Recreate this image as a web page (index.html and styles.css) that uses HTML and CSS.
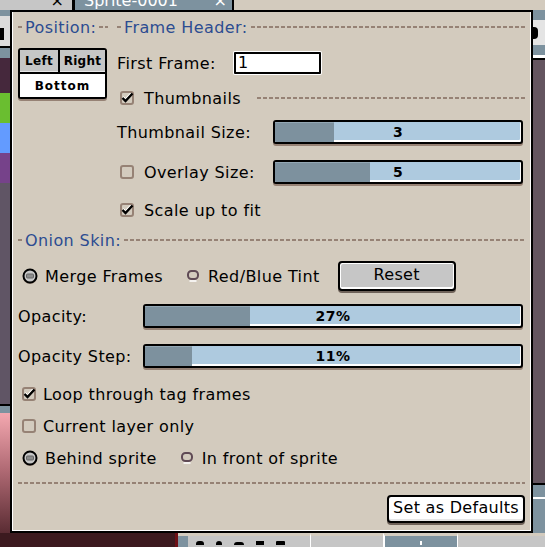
FILE: index.html
```html
<!DOCTYPE html>
<html lang="en">
<head>
    <meta charset="UTF-8">
    <title>Onion Skin / Frame Header</title>
    <link rel="stylesheet" href="styles.css">
</head>
<body>
    <div class="desk">
        <div class="tabbar">
            <div class="tab tab-off"><span class="tab-x">×</span></div>
            <div class="tab tab-on"><span class="tab-name">Sprite-0001</span><span class="tab-x">×</span></div>
            <div class="tab-rest"></div>
        </div>
        <div class="mid">
            <div class="strip strip-left"><span class="glyph glyph-left"></span></div>
            <div class="canvas"></div>
            <div class="strip strip-right"><span class="glyph glyph-right"></span></div>
        </div>
        <div class="statusbar">
            <div class="sb sb-canvas"></div>
            <div class="sb sb-red"></div>
            <div class="sb sb-blue"></div>
            <div class="sb sb-tools">
                <span class="ico ico-eye"></span>
                <span class="ico ico-lock"></span>
                <span class="ico ico-link"></span>
                <span class="ico ico-cel"></span>
                <span class="ico ico-box"></span>
            </div>
            <div class="sb sb-grey"></div>
            <div class="sb sb-frame"><span class="ico ico-plus"></span></div>
            <div class="sb sb-end"></div>
        </div>
    </div>

    <div class="popup">
        <div class="top">
            <div class="pos-col">
                <div class="sep-title"><span class="title">Position:</span><span class="dash"></span></div>
                <div class="seg">
                    <div class="seg-btn">Left</div>
                    <div class="seg-btn">Right</div>
                    <div class="seg-btn seg-wide seg-on">Bottom</div>
                </div>
            </div>

            <div class="frame-col">
                <div class="sep-title"><span class="title">Frame Header:</span><span class="dash"></span></div>

                <div class="row r-first">
                    <span class="lbl-first">First Frame:</span>
                    <div class="num">1</div>
                </div>

                <div class="row r-thumbs">
                    <svg class="cb" width="14" height="14" viewBox="0 0 14 14"><rect x="1" y="1" width="12" height="12" rx="2" fill="none" stroke="#968275" stroke-width="2"/><path d="M2.5 7 L5.5 10 L12.5 2.5" fill="none" stroke="#000" stroke-width="2.4"/><path d="M3.5 5.5 L5.5 7.5 L10.5 2" fill="none" stroke="#fff" stroke-width="1"/></svg>
                    <span class="txt">Thumbnails</span>
                    <span class="dash dash-thumbs"></span>
                </div>

                <div class="row r-tsize">
                    <span class="lbl-frame">Thumbnail Size:</span>
                    <div class="slider"><span class="fill" style="width: 59px"></span><span class="val">3</span></div>
                </div>

                <div class="row r-overlay">
                    <span class="lbl-frame">
                        <svg class="cb" width="14" height="14" viewBox="0 0 14 14"><rect x="1" y="1" width="12" height="12" rx="2" fill="none" stroke="#968275" stroke-width="2"/></svg>
                        <span class="txt">Overlay Size:</span>
                    </span>
                    <div class="slider"><span class="fill" style="width: 95px"></span><span class="val">5</span></div>
                </div>

                <div class="row r-scale">
                    <svg class="cb" width="14" height="14" viewBox="0 0 14 14"><rect x="1" y="1" width="12" height="12" rx="2" fill="none" stroke="#968275" stroke-width="2"/><path d="M2.5 7 L5.5 10 L12.5 2.5" fill="none" stroke="#000" stroke-width="2.4"/><path d="M3.5 5.5 L5.5 7.5 L10.5 2" fill="none" stroke="#fff" stroke-width="1"/></svg>
                    <span class="txt">Scale up to fit</span>
                </div>
            </div>
        </div>

        <div class="sep-title onion-title"><span class="title">Onion Skin:</span><span class="dash"></span></div>

        <div class="row r-merge">
            <svg class="rd-on" width="16" height="16" viewBox="0 0 16 16"><circle cx="8" cy="9" r="7" fill="#968275"/><circle cx="8" cy="8" r="6.5" fill="#c6c6c6" stroke="#000" stroke-width="2"/><rect x="4.5" y="6" width="7" height="4" rx="1" fill="#8c8c8c" stroke="#666" stroke-width="1"/></svg>
            <span class="txt-rd">Merge Frames</span>
            <svg class="rd-off" width="12" height="12" viewBox="0 0 12 12"><rect x="1" y="1" width="10" height="8" rx="3.5" fill="none" stroke="#5f4a55" stroke-width="2"/><path d="M2.5 11 H9.5" stroke="#fff" stroke-width="1.5"/></svg>
            <span class="txt-rd2">Red/Blue Tint</span>
            <button class="btn btn-reset">Reset</button>
        </div>

        <div class="row r-opacity">
            <span class="lbl-onion">Opacity:</span>
            <div class="slider"><span class="fill" style="width: 105px"></span><span class="val">27%</span></div>
        </div>

        <div class="row r-step">
            <span class="lbl-onion">Opacity Step:</span>
            <div class="slider"><span class="fill" style="width: 47px"></span><span class="val">11%</span></div>
        </div>

        <div class="row r-loop">
            <svg class="cb cb-onion" width="14" height="14" viewBox="0 0 14 14"><rect x="1" y="1" width="12" height="12" rx="2" fill="none" stroke="#968275" stroke-width="2"/><path d="M2.5 7 L5.5 10 L12.5 2.5" fill="none" stroke="#000" stroke-width="2.4"/><path d="M3.5 5.5 L5.5 7.5 L10.5 2" fill="none" stroke="#fff" stroke-width="1"/></svg>
            <span class="txt-rd">Loop through tag frames</span>
        </div>

        <div class="row r-layer">
            <svg class="cb cb-onion" width="14" height="14" viewBox="0 0 14 14"><rect x="1" y="1" width="12" height="12" rx="2" fill="none" stroke="#968275" stroke-width="2"/></svg>
            <span class="txt-rd">Current layer only</span>
        </div>

        <div class="row r-behind">
            <svg class="rd-on" width="16" height="16" viewBox="0 0 16 16"><circle cx="8" cy="9" r="7" fill="#968275"/><circle cx="8" cy="8" r="6.5" fill="#c6c6c6" stroke="#000" stroke-width="2"/><rect x="4.5" y="6" width="7" height="4" rx="1" fill="#8c8c8c" stroke="#666" stroke-width="1"/></svg>
            <span class="txt-rd">Behind sprite</span>
            <svg class="rd-off" width="12" height="12" viewBox="0 0 12 12"><rect x="1" y="1" width="10" height="8" rx="3.5" fill="none" stroke="#5f4a55" stroke-width="2"/><path d="M2.5 11 H9.5" stroke="#fff" stroke-width="1.5"/></svg>
            <span class="txt-rd2">In front of sprite</span>
        </div>

        <div class="dash sep-bottom"></div>

        <div class="footer">
            <button class="btn btn-defaults">Set as Defaults</button>
        </div>
    </div>
</body>
</html>
```

FILE: styles.css
```css
* {
    box-sizing: border-box;
}

body {
    margin: 0;
    width: 545px;
    height: 547px;
    position: relative;
    overflow: hidden;
    font-family: "DejaVu Sans", "Liberation Sans", sans-serif;
    font-size: 16px;
    color: #000;
    background: #d3cbbe;
}

/* ---- backdrop: the editor behind the popup ---- */

.desk {
    display: grid;
    grid-template-rows: 10px 523px 14px;
    height: 547px;
}

.tabbar {
    display: flex;
    overflow: hidden;
}

.tab {
    display: flex;
    justify-content: space-between;
    line-height: 16px;
}

.tab span {
    margin-top: -7px;
}

.tab-off {
    width: 75px;
    background: #c6c6c6;
    border-right: 3px solid #000;
    justify-content: flex-end;
    padding-right: 8px;
}

.tab-on {
    width: 159px;
    background: #7d929f;
    color: #fff;
    border-right: 2px solid #000;
    padding: 0 5px 0 9px;
}

.tab-rest {
    flex: 1;
}

.mid {
    display: grid;
    grid-template-columns: 10px 1fr 12px;
}

.strip {
    position: relative;
}

.strip-left {
    background: linear-gradient(to bottom,
        #7d929f 0 6px, #dcdcdc 6px 36px, #000 36px 38px, #7d929f 38px 48px,
        #45283c 48px 83px, #6abe30 83px 113px, #639bff 113px 143px,
        #76428a 143px 173px, #605565 173px 394px, #000 394px 396px,
        #7d929f 396px 403px, #f4a8b0 403px, #b06a74 460px, #5a2c33 523px);
}

.strip-right {
    background: linear-gradient(to bottom,
        #7d929f 0 10px, #e4e4e4 10px 35px, #7d929f 35px 45px, #fff 45px 48px,
        #000 48px 50px, #645560 50px 473px, #000 473px 475px,
        #7d929f 475px 487px, #fff 487px 489px, #7d929f 489px);
}

.glyph {
    position: absolute;
    background: #000;
}

.glyph-left {
    left: 0;
    top: 18px;
    width: 4px;
    height: 12px;
}

.glyph-right {
    left: 0;
    top: 17px;
    width: 5px;
    height: 12px;
    border-radius: 0 4px 4px 0;
}

.statusbar {
    display: flex;
}

.sb {
    height: 14px;
}

.sb-canvas {
    width: 175px;
    background: #3c1a1f;
}

.sb-red {
    width: 3px;
    background: #6e1016;
}

.sb-blue {
    width: 10px;
    background: #7d929f;
    border-top: 3px solid #d3cbbe;
}

.sb-tools {
    width: 122px;
    background: #c6c6c6;
    border-top: 3px solid #d3cbbe;
    display: flex;
    gap: 12px;
    padding: 5px 0 0 8px;
}

.sb-grey {
    width: 73px;
    background: #c6c6c6;
    border-top: 3px solid #d3cbbe;
    border-left: 1px solid #fff;
}

.sb-frame {
    width: 74px;
    background: #7d929f;
    border-top: 3px solid #d3cbbe;
    border-left: 2px solid #fff;
    display: flex;
    justify-content: center;
    padding-top: 5px;
}

.sb-end {
    flex: 1;
    background: #c6c6c6;
    border-top: 3px solid #d3cbbe;
    border-left: 1px solid #fff;
}

.ico {
    display: block;
    width: 8px;
    height: 4px;
    background: #000;
    border-radius: 3px 3px 0 0;
}

.ico-lock {
    width: 6px;
}

.ico-link {
    width: 10px;
    height: 3px;
    margin-top: 1px;
}

.ico-cel {
    width: 8px;
    border-radius: 0;
}

.ico-box {
    width: 9px;
    border-radius: 1px 1px 0 0;
}

.ico-plus {
    width: 2px;
    background: #fff;
    border-radius: 0;
}

/* ---- popup ---- */

.popup {
    position: absolute;
    left: 10px;
    top: 10px;
    width: 523px;
    height: 523px;
    background: #d3cbbe;
    border: 2px solid #000;
    box-shadow: inset 1px 0 0 #fff, inset -1px -1px 0 #fff;
    padding: 8px 6px 0 6px;
    letter-spacing: 0.4px;
}

.top {
    display: flex;
    gap: 9px;
}

.pos-col {
    width: 90px;
}

.frame-col {
    flex: 1;
}

.sep-title {
    display: flex;
    align-items: center;
    height: 14px;
    color: #2c4c91;
}

.sep-title::before {
    content: "";
    width: 4px;
    height: 2px;
    background: #968275;
    margin-right: 3px;
}

.dash {
    flex: 1;
    height: 2px;
    margin-left: 3px;
    background: repeating-linear-gradient(90deg, #968275 0 4px, transparent 4px 6px);
}

.seg {
    margin-top: 14px;
    width: 89px;
    display: grid;
    grid-template-columns: 38px 45px;
    grid-template-rows: 22px 23px;
    gap: 2px;
    background: #000;
    border: 2px solid #000;
    border-radius: 3px;
    box-shadow: 0 2px 0 #968275;
}

.seg-btn {
    background: #c6c6c6;
    font-size: 12px;
    font-weight: bold;
    letter-spacing: 0.3px;
    display: flex;
    align-items: center;
    justify-content: center;
    box-shadow: inset 0 -1px 0 #e8e8e8;
}

.seg-wide {
    grid-column: 1 / 3;
}

.seg-on {
    background: #fff;
    letter-spacing: 1px;
    box-shadow: none;
}

.row {
    display: flex;
    align-items: center;
    height: 24px;
}

.r-first { margin-top: 17px; }
.r-thumbs { margin-top: 11px; }
.r-tsize { margin-top: 10px; }
.r-overlay { margin-top: 16px; }
.r-scale { margin-top: 14px; }
.onion-title { margin-top: 11px; }
.r-merge { margin-top: 17px; }
.r-opacity { margin-top: 16px; }
.r-step { margin-top: 16px; }
.r-loop { margin-top: 14px; }
.r-layer { margin-top: 8px; }
.r-behind { margin-top: 8px; }

.lbl-first {
    width: 117px;
}

.num {
    width: 87px;
    height: 22px;
    background: #fff;
    border: 2px solid #000;
    border-radius: 1px;
    box-shadow: 0 0 0 1px #fff;
    padding-left: 2px;
    line-height: 18px;
}

.cb {
    flex: none;
    margin-left: 3px;
}

.cb-onion {
    margin-left: 4px;
}

.txt {
    margin-left: 10px;
}

.dash-thumbs {
    margin-left: 16px;
}

.lbl-frame {
    width: 156px;
    display: flex;
    align-items: center;
}

.lbl-onion {
    width: 125px;
}

.slider {
    flex: 1;
    margin-right: 2px;
    height: 24px;
    position: relative;
    display: flex;
    align-items: center;
    justify-content: center;
    background: #aecadf;
    border: 2px solid #000;
    border-radius: 3px;
    box-shadow: inset -1px -2px 0 #fff, 0 2px 0 #968275;
    overflow: hidden;
}

.fill {
    position: absolute;
    left: 0;
    top: 0;
    bottom: 0;
    background: #7d919e;
    box-shadow: inset 0 1px 0 #93a7b4;
}

.val {
    position: relative;
    font-size: 14px;
    font-weight: bold;
    letter-spacing: 0.5px;
}

.rd-on {
    flex: none;
    margin-left: 4px;
}

.txt-rd {
    margin-left: 7px;
}

.rd-off {
    flex: none;
    margin-left: 24px;
}

.txt-rd2 {
    margin-left: 9px;
}

.btn {
    font-family: "DejaVu Sans", "Liberation Sans", sans-serif;
    font-size: 16px;
    letter-spacing: 0.3px;
    color: #000;
    border: 2px solid #000;
    border-radius: 4px;
    padding: 0;
}

.btn-reset {
    margin-left: 18px;
    width: 118px;
    height: 30px;
    background: #c6c6c6;
    box-shadow: inset 1px 1px 0 #fff, inset -1px -2px 0 #fff, 0 2px 0 #6e6259;
    padding-bottom: 4px;
}

.sep-bottom {
    flex: none;
    margin: 12px 0 0 0;
}

.footer {
    display: flex;
    justify-content: flex-end;
    margin-top: 11px;
}

.btn-defaults {
    width: 138px;
    height: 28px;
    background: #fff;
    box-shadow: inset 0 -2px 0 #e6e6e6, 0 2px 0 #6e6259;
    padding-bottom: 3px;
}
```
